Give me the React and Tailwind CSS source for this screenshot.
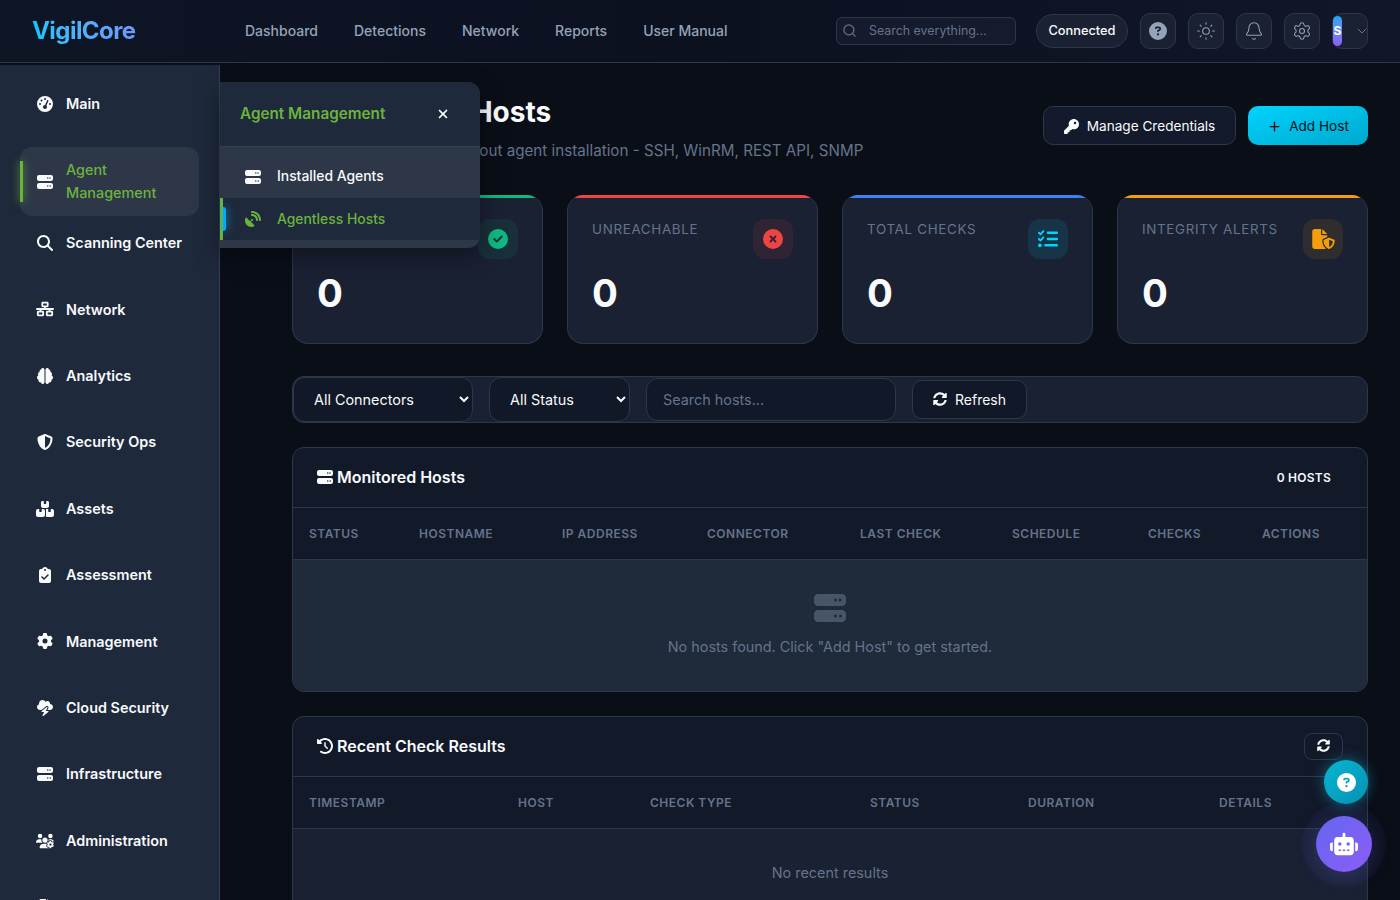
import React from "react";
import { FaSyncAlt } from "react-icons/fa";
import {
  FaGaugeHigh,
  FaServer,
  FaMagnifyingGlass,
  FaNetworkWired,
  FaBrain,
  FaShieldHalved,
  FaBoxesStacked,
  FaClipboardCheck,
  FaGear,
  FaUsersGear,
  FaSatelliteDish,
  FaKey,
  FaClockRotateLeft,
  FaCircleQuestion,
  FaRobot,
  FaXmark,
  FaCircleXmark,
  FaCircleCheck,
  FaListCheck,
  FaFile,
  FaCloudBolt,
  FaFileShield,
} from "react-icons/fa6";
import { Search, Sun, Bell, Settings, ChevronDown, Plus } from "lucide-react";

const navLinks = ["Dashboard", "Detections", "Network", "Reports", "User Manual"];

const sideRest = [
  { label: "Network", icon: FaNetworkWired },
  { label: "Analytics", icon: FaBrain },
  { label: "Security Ops", icon: FaShieldHalved },
  { label: "Assets", icon: FaBoxesStacked },
  { label: "Assessment", icon: FaClipboardCheck },
  { label: "Management", icon: FaGear },
  { label: "Cloud Security", icon: FaCloudBolt },
  { label: "Infrastructure", icon: FaServer },
  { label: "Administration", icon: FaUsersGear },
  { label: "", icon: FaFile },
];

const stats = [
  { label: "ONLINE", bar: "bg-[#10b981]", tint: "bg-[#10b981]/10", color: "text-[#10b981]", icon: FaCircleCheck, size: "w-5 h-5" },
  { label: "UNREACHABLE", bar: "bg-[#ef4444]", tint: "bg-[#ef4444]/10", color: "text-[#ef4444]", icon: FaCircleXmark, size: "w-5 h-5" },
  { label: "TOTAL CHECKS", bar: "bg-[#3b82f6]", tint: "bg-[#00d4ff]/10", color: "text-[#00d4ff]", icon: FaListCheck, size: "w-5 h-5" },
  { label: "INTEGRITY ALERTS", bar: "bg-[#f59e0b]", tint: "bg-[#f59e0b]/10", color: "text-[#f59e0b]", icon: FaFileShield, size: "w-[25px] h-5" },
];

const hostCols = ["STATUS", "HOSTNAME", "IP ADDRESS", "CONNECTOR", "LAST CHECK", "SCHEDULE", "CHECKS", "ACTIONS"];
const recentCols = ["TIMESTAMP", "HOST", "CHECK TYPE", "STATUS", "DURATION", "DETAILS"];

const SideItem = ({ label, icon: Icon }) => (
  <div className="flex items-center gap-3 h-[46.4px] px-4 text-[14.4px] font-semibold text-[#f8fafc]">
    <Icon className="w-[18px] h-4 shrink-0" />
    <span>{label}</span>
  </div>
);

const IconBtn = ({ children }) => (
  <button className="w-9 h-9 flex items-center justify-center rounded-[10px] bg-[#1a2133] border border-[#2d3748] text-[#94a3b8]">
    {children}
  </button>
);

const StatCard = ({ label, bar, tint, color, icon: Icon, size }) => (
  <div className="h-[149px] rounded-2xl overflow-hidden bg-[#1a2133] border border-t-0 border-[#2d3748]">
    <div className={`h-[3px] ${bar}`} />
    <div className="flex justify-between px-6 pt-[21px]">
      <span className="text-[13.4px] leading-5 tracking-[0.05em] text-[#64748b]">{label}</span>
      <div className={`w-10 h-10 rounded-xl flex items-center justify-center ${tint} ${color}`}>
        <Icon className={size} />
      </div>
    </div>
    <div className="px-6 mt-[10px] text-[38.4px] leading-12 font-bold text-[#f8fafc]">0</div>
  </div>
);

const App = () => {
  return (
    <div className="relative h-screen overflow-hidden flex flex-col bg-[#0a0e17] font-['Inter',sans-serif]">
      {/* top bar */}
      <header className="h-[63px] shrink-0 flex items-center pl-8 pr-8 border-b border-[#2d3748] bg-gradient-to-r from-[#0e1525] via-[#0c1120] to-[#111729]">
        <div className="w-[213px] text-[24px] font-bold tracking-[-0.55px] bg-gradient-to-r from-[#00c6ff] to-[#8b5cf6] bg-clip-text text-transparent">
          VigilCore
        </div>
        <nav className="flex gap-9 pb-px text-[14px] font-medium text-[#94a3b8]">
          {navLinks.map((l) => (
            <a key={l}>{l}</a>
          ))}
        </nav>
        <div className="ml-auto flex items-center">
          <div className="w-[180px] h-7 flex items-center gap-3 px-[5px] rounded-md bg-[#1a2133]/60 border border-[#2d3748]">
            <Search className="w-[15px] h-[15px] -mt-[2px] text-[#64748b]" />
            <span className="text-[12.4px] text-[#64748b]">Search everything...</span>
          </div>
          <div className="ml-5 w-[92px] h-[34px] flex items-center justify-center rounded-full bg-[#1a2133] border border-[#2d3748] text-[12.8px] font-medium text-[#f8fafc]">
            Connected
          </div>
          <div className="ml-3 flex gap-3">
            <IconBtn>
              <FaCircleQuestion className="w-[18px] h-[18px]" />
            </IconBtn>
            <IconBtn>
              <Sun className="w-5 h-5" strokeWidth={1.25} />
            </IconBtn>
            <IconBtn>
              <Bell className="w-5 h-5" strokeWidth={1.25} />
            </IconBtn>
            <IconBtn>
              <Settings className="w-5 h-5" strokeWidth={1.25} />
            </IconBtn>
            <button className="w-9 h-9 flex items-center rounded-[10px] bg-[#1a2133] border border-[#2d3748] text-[#64748b]">
              <span className="w-[9px] h-[30px] rounded-full bg-gradient-to-b from-[#00a8f0] to-[#8b5cf6] text-[12px] font-bold text-white flex items-center justify-center">
                S
              </span>
              <ChevronDown className="w-4 h-4 ml-auto -mr-[3px]" strokeWidth={1.5} />
            </button>
          </div>
        </div>
      </header>

      <div className="flex flex-1 min-h-0 mt-[2px]">
        {/* sidebar */}
        <aside className="w-[220px] shrink-0 overflow-hidden bg-[#1e293b] border-r border-[#334155] px-5 pt-4">
          <SideItem label="Main" icon={FaGaugeHigh} />
          <div className="relative mt-5 h-[69px] flex items-center gap-3 px-4 rounded-xl bg-[#2d3748] text-[14.4px] leading-[23px] font-medium text-[#6cb33e]">
            <div className="absolute left-0 top-[14px] w-[3px] h-[41px] bg-[#6cb33e] shadow-[0_0_8px_#6cb33e]" />
            <FaServer className="w-[18px] h-4 shrink-0 text-[#f8fafc]" />
            <span className="-mt-[2px]">
              Agent
              <br />
              Management
            </span>
          </div>
          <div className="mt-[3.4px]">
            <SideItem label="Scanning Center" icon={FaMagnifyingGlass} />
          </div>
          <div className="mt-[20.1px] flex flex-col gap-5">
            {sideRest.map((s) => (
              <SideItem key={s.label} {...s} />
            ))}
          </div>
        </aside>

        {/* page */}
        <main className="flex-1 min-w-0 overflow-hidden pl-[72px] pr-8 pt-[30px]">
          <div className="h-[100px] flex justify-between">
            <div>
              <h1 className="flex items-center gap-[7px] text-[28px] leading-[34px] font-bold text-[#f8fafc]">
                <FaSatelliteDish className="w-7 h-7" />
                Agentless Hosts
              </h1>
              <p className="mt-[10px] text-[15.2px] leading-6 text-[#64748b]">
                Monitor remote hosts without agent installation - SSH, WinRM, REST API, SNMP
              </p>
            </div>
            <div className="flex gap-3 mt-[11px]">
              <button className="w-[193px] h-[39px] pt-px flex items-center justify-center gap-2 rounded-[10px] bg-[#131a2b] border border-[#2d3748] text-[13.6px] text-[#f8fafc]">
                <FaKey className="w-[15px] h-[15px]" />
                Manage Credentials
              </button>
              <button className="w-[120px] h-[39px] pt-px flex items-center justify-center gap-[7px] rounded-[10px] bg-gradient-to-br from-[#00d4ff] to-[#00a8cc] text-[13.6px] text-[#0a0e17]">
                <Plus className="w-[15px] h-[15px]" />
                Add Host
              </button>
            </div>
          </div>

          <div className="grid grid-cols-4 gap-6">
            {stats.map((s) => (
              <StatCard key={s.label} {...s} />
            ))}
          </div>

          {/* filters */}
          <div className="mt-8 h-[47px] flex items-center rounded-xl bg-[#1a2133] border border-[#2d3748]">
            <select className="w-[180px] h-[45px] pl-4 pr-2 rounded-xl bg-[#111827] border border-[#2d3748] text-[14.4px] text-[#f8fafc] outline-none">
              <option>All Connectors</option>
            </select>
            <select className="ml-4 w-[141px] h-[45px] pl-4 pr-2 rounded-xl bg-[#111827] border border-[#2d3748] text-[14.4px] text-[#f8fafc] outline-none">
              <option>All Status</option>
            </select>
            <input
              placeholder="Search hosts..."
              className="ml-4 w-[250px] h-[43px] px-4 rounded-xl bg-[#111827] border border-[#2d3748] text-[14.4px] text-[#f8fafc] placeholder:text-[#64748b] outline-none"
            />
            <button className="ml-4 w-[115px] h-[39px] flex items-center justify-center gap-2 rounded-[10px] bg-[#111827] border border-[#2d3748] text-[14px] text-[#f8fafc]">
              <FaSyncAlt className="w-[14px] h-[14px] -mt-px" />
              Refresh
            </button>
          </div>

          {/* monitored hosts */}
          <section className="mt-6 h-[245px] rounded-xl overflow-hidden bg-[#121929] border border-[#2d3748]">
            <div className="h-[60px] flex items-center justify-between pl-6 pr-9 border-b border-[#2d3748]">
              <h2 className="flex items-center gap-1 pb-[2px] text-[16px] font-semibold text-[#f8fafc]">
                <FaServer className="w-4 h-4" />
                Monitored Hosts
              </h2>
              <span className="text-[12px] font-semibold tracking-[0.02em] text-[#f8fafc]">0 HOSTS</span>
            </div>
            <div className="h-[52px] grid grid-cols-[110px_143px_145px_153px_152px_136px_114px_1fr] items-center pl-4 border-b border-[#2d3748] text-[12px] font-semibold tracking-[0.5px] text-[#64748b]">
              {hostCols.map((c) => (
                <span key={c}>{c}</span>
              ))}
            </div>
            <div className="h-[131px] flex flex-col items-center pt-8 bg-[#1f2a3a]">
              <FaServer className="w-8 h-8 text-[#475569]" />
              <p className="mt-3 text-[14.4px] text-[#64748b]">No hosts found. Click "Add Host" to get started.</p>
            </div>
          </section>

          {/* recent checks */}
          <section className="mt-6 rounded-xl overflow-hidden bg-[#121929] border border-[#2d3748]">
            <div className="h-[60px] flex items-center justify-between pl-6 pr-6 border-b border-[#2d3748]">
              <h2 className="flex items-center gap-1 pb-[2px] text-[16px] font-semibold text-[#f8fafc]">
                <FaClockRotateLeft className="w-4 h-4" />
                Recent Check Results
              </h2>
              <button className="w-[39px] h-[27px] flex items-center justify-center rounded-lg border border-[#2d3748] text-[#f8fafc]">
                <FaSyncAlt className="w-[13px] h-[13px] -mt-[2px]" />
              </button>
            </div>
            <div className="h-[52px] grid grid-cols-[209px_132px_220px_158px_191px_1fr] items-center pl-4 border-b border-[#2d3748] text-[12px] font-semibold tracking-[0.5px] text-[#64748b]">
              {recentCols.map((c) => (
                <span key={c}>{c}</span>
              ))}
            </div>
            <div className="h-[131px] pt-[33px] text-center bg-[#1a2133] text-[14.4px] text-[#64748b]">
              No recent results
            </div>
          </section>
        </main>
      </div>

      {/* flyout menu */}
      <div className="absolute left-[220px] top-[82px] w-[260px] h-[166px] overflow-hidden rounded-r-xl bg-[#2d3748] shadow-[0_8px_24px_rgba(0,0,0,0.4)]">
        <div className="h-[65px] flex items-center justify-between pl-5 pr-[30px] bg-[#1e293b] border-b border-[#334155]">
          <span className="text-[15.3px] font-semibold text-[#6cb33e]">Agent Management</span>
          <FaXmark className="w-[14px] h-[14px] text-[#f8fafc]" />
        </div>
        <div className="mt-[8px] h-[43px] flex items-center gap-4 pl-[25px] text-[13.9px] font-medium text-[#f8fafc]">
          <FaServer className="w-4 h-4" />
          Installed Agents
        </div>
        <div className="relative h-[42px] flex items-center gap-4 pl-[25px] bg-[#1e293b] text-[13.9px] font-medium text-[#6cb33e]">
          <div className="absolute left-0 top-0 w-[3px] h-full bg-[#6cb33e]" />
          <div className="absolute left-[3px] top-[9px] w-[3px] h-6 rounded-r bg-[#00aaff] shadow-[0_0_8px_#00aaff]" />
          <FaSatelliteDish className="w-4 h-4" />
          Agentless Hosts
        </div>
      </div>

      {/* floating buttons */}
      <button className="absolute left-[1324px] top-[760px] w-11 h-11 rounded-full flex items-center justify-center bg-gradient-to-br from-[#06b6d4] to-[#0891b2] text-white shadow-[0_0_14px_rgba(6,182,212,0.5)]">
        <FaCircleQuestion className="w-[19px] h-[19px]" />
      </button>
      <button className="absolute left-[1316px] top-[816px] w-14 h-14 rounded-full flex items-center justify-center bg-gradient-to-br from-[#6366f1] to-[#8b5cf6] text-white shadow-[0_0_0_14px_rgba(99,102,241,0.05),0_4px_20px_rgba(99,102,241,0.25)]">
        <FaRobot className="w-7 h-7" />
      </button>
    </div>
  );
};

export default App;
